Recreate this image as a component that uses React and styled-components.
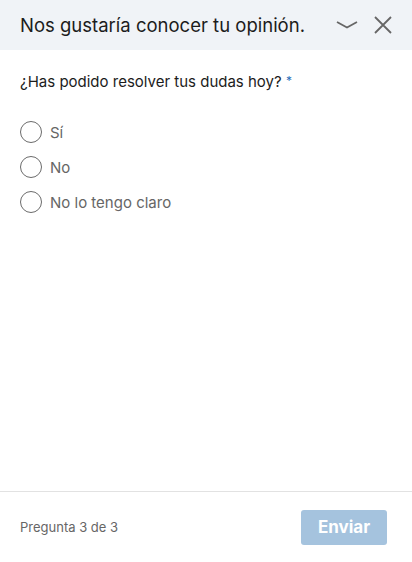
import React, { useState } from 'react';
import styled, { createGlobalStyle } from 'styled-components';

const GlobalStyle = createGlobalStyle`
  html, body {
    margin: 0;
    padding: 0;
    background: #fff;
  }
  body {
    font-family: 'Inter', 'Liberation Sans', sans-serif;
    -webkit-font-smoothing: antialiased;
  }
`;

const options = ['Sí', 'No', 'No lo tengo claro'];

const App = () => {
  const [picked, setPicked] = useState(null);

  return (
    <>
      <GlobalStyle />
      <Panel>
        <Header>
          <Title>Nos gustaría conocer tu opinión.</Title>
          <HeaderIcons>
            <IconButton aria-label="Minimizar">
              <svg width="24" height="12" viewBox="0 0 24 12">
                <path d="M2 3 L12 8.5 L22 3" fill="none" stroke="#666" strokeWidth="1.8" />
              </svg>
            </IconButton>
            <IconButton aria-label="Cerrar">
              <svg width="20" height="20" viewBox="0 0 20 20">
                <path d="M2 2 L18 18 M18 2 L2 18" fill="none" stroke="#666" strokeWidth="1.8" />
              </svg>
            </IconButton>
          </HeaderIcons>
        </Header>

        <Body>
          <Question>
            ¿Has podido resolver tus dudas hoy? <Required>*</Required>
          </Question>
          <Options>
            {options.map((opt, i) => (
              <Option key={opt} onClick={() => setPicked(i)}>
                <Radio checked={picked === i} />
                <OptionLabel>{opt}</OptionLabel>
              </Option>
            ))}
          </Options>
        </Body>

        <Footer>
          <Progress>Pregunta 3 de 3</Progress>
          <SendButton disabled={picked === null}>Enviar</SendButton>
        </Footer>
      </Panel>
    </>
  );
};

export default App;

const Panel = styled.div`
  width: 412px;
  height: 562px;
  display: flex;
  flex-direction: column;
  background: #fff;
`;

const Header = styled.div`
  height: 50px;
  flex-shrink: 0;
  background: #f0f3f7;
  display: flex;
  align-items: center;
  justify-content: space-between;
  padding: 0 19px 0 20px;
  box-sizing: border-box;
`;

const Title = styled.h1`
  margin: 0;
  font-size: 18.5px;
  font-weight: 400;
  color: #1c1c1c;
`;

const HeaderIcons = styled.div`
  display: flex;
  align-items: center;
  gap: 14px;
`;

const IconButton = styled.button`
  border: none;
  background: none;
  padding: 0;
  display: flex;
  align-items: center;
  cursor: pointer;
`;

const Body = styled.div`
  flex: 1;
  padding: 21px 20px 0;
`;

const Question = styled.p`
  margin: 0;
  font-size: 15px;
  color: #1c1c1c;
  line-height: 19px;
`;

const Required = styled.span`
  color: #2a6ebb;
  font-size: 12px;
  vertical-align: 2px;
`;

const Options = styled.div`
  display: flex;
  flex-direction: column;
  gap: 13px;
  margin-top: 30px;
`;

const Option = styled.label`
  display: flex;
  align-items: center;
  gap: 8px;
  height: 22px;
  cursor: pointer;
`;

const Radio = styled.span`
  width: 22px;
  height: 22px;
  box-sizing: border-box;
  border-radius: 50%;
  border: 1.5px solid #6b6b6b;
  background: ${(props) => (props.checked ? 'radial-gradient(#1f5fa8 40%, #fff 45%)' : '#fff')};
`;

const OptionLabel = styled.span`
  font-size: 15px;
  color: #666;
`;

const Footer = styled.div`
  height: 70px;
  flex-shrink: 0;
  border-top: 1px solid #e2e2e2;
  display: flex;
  align-items: center;
  justify-content: space-between;
  padding: 0 25px 0 20px;
`;

const Progress = styled.span`
  font-size: 13px;
  color: #666;
`;

const SendButton = styled.button`
  width: 86px;
  height: 35px;
  border: none;
  border-radius: 3px;
  background: ${(props) => (props.disabled ? '#a5c3de' : '#1f5fa8')};
  color: #fff;
  font-family: inherit;
  font-size: 17px;
  font-weight: 700;
`;
